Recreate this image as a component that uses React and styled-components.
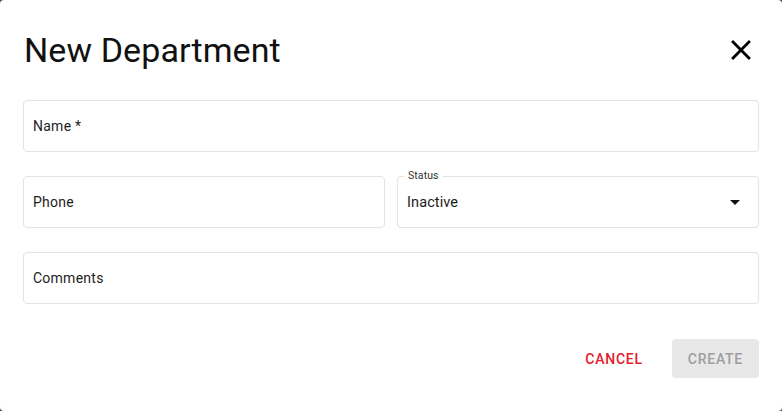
import React from "react";
import styled, { createGlobalStyle } from "styled-components";

const Global = createGlobalStyle`
  html, body {
    margin: 0;
    padding: 0;
    background: #4a4a4a;
  }
  body {
    font-family: Roboto, "Liberation Sans", sans-serif;
  }
`;

const Dialog = styled.div`
  box-sizing: border-box;
  width: 782px;
  height: 411px;
  background: #fff;
  border-radius: 4px;
  padding: 0 23px;
  display: flex;
  flex-direction: column;
`;

const Header = styled.div`
  height: 100px;
  display: flex;
  align-items: center;
  justify-content: space-between;
`;

const Title = styled.h2`
  margin: 0;
  padding-left: 1px;
  font-size: 34px;
  font-weight: 400;
  color: #111;
  letter-spacing: 0.1px;
`;

const CloseButton = styled.button`
  border: 0;
  background: none;
  padding: 0;
  width: 34px;
  height: 34px;
  margin-right: 1px;
  display: flex;
  align-items: center;
  justify-content: center;
  cursor: pointer;
`;

const Form = styled.div`
  display: flex;
  flex-direction: column;
  gap: 24px;
`;

const Row = styled.div`
  display: grid;
  grid-template-columns: 1fr 1fr;
  gap: 12px;
`;

const Field = styled.div`
  position: relative;
  box-sizing: border-box;
  height: 52px;
  border: 1px solid #e3e3e3;
  border-radius: 4px;
  padding: 0 ${(p) => (p.$select ? "11px" : "9px")} 0 9px;
  display: flex;
  align-items: center;
  justify-content: space-between;
  font-size: 14px;
  letter-spacing: 0.25px;
  color: #1d1d1d;
`;

const FloatLabel = styled.span`
  position: absolute;
  top: -7px;
  left: 6px;
  padding: 0 4px;
  background: #fff;
  font-size: 10.5px;
  line-height: 12px;
  letter-spacing: 0.1px;
  color: #333;
`;

const Value = styled.span`
  font-size: 14.5px;
  letter-spacing: 0.1px;
  color: #1a1a1a;
`;

const Actions = styled.div`
  margin-top: 35px;
  display: flex;
  justify-content: flex-end;
  align-items: center;
  gap: 13px;
`;

const Button = styled.button`
  border: 0;
  border-radius: 4px;
  height: 39px;
  padding: 0 16px;
  font-family: Roboto, "Liberation Sans", sans-serif;
  font-size: 14px;
  font-weight: 500;
  letter-spacing: 0.75px;
  text-transform: uppercase;
  background: ${(p) => (p.$filled ? "#e8e8e8" : "transparent")};
  color: ${(p) => (p.$filled ? "#9e9e9e" : "#e3202c")};
  cursor: pointer;
`;

const CloseIcon = () => (
  <svg width="34" height="34" viewBox="0 0 24 24" fill="#000">
    <path d="M19 6.41 17.59 5 12 10.59 6.41 5 5 6.41 10.59 12 5 17.59 6.41 19 12 13.41 17.59 19 19 17.59 13.41 12z" />
  </svg>
);

const ArrowDrop = () => (
  <svg width="24" height="24" viewBox="0 0 24 24" fill="#111">
    <path d="M7 10l5 5 5-5z" />
  </svg>
);

export default function App() {
  return (
    <>
      <Global />
      <Dialog>
        <Header>
          <Title>New Department</Title>
          <CloseButton aria-label="close">
            <CloseIcon />
          </CloseButton>
        </Header>
        <Form>
          <Field>Name *</Field>
          <Row>
            <Field>Phone</Field>
            <Field $select>
              <FloatLabel>Status</FloatLabel>
              <Value>Inactive</Value>
              <ArrowDrop />
            </Field>
          </Row>
          <Field>Comments</Field>
        </Form>
        <Actions>
          <Button>Cancel</Button>
          <Button $filled disabled>Create</Button>
        </Actions>
      </Dialog>
    </>
  );
}
